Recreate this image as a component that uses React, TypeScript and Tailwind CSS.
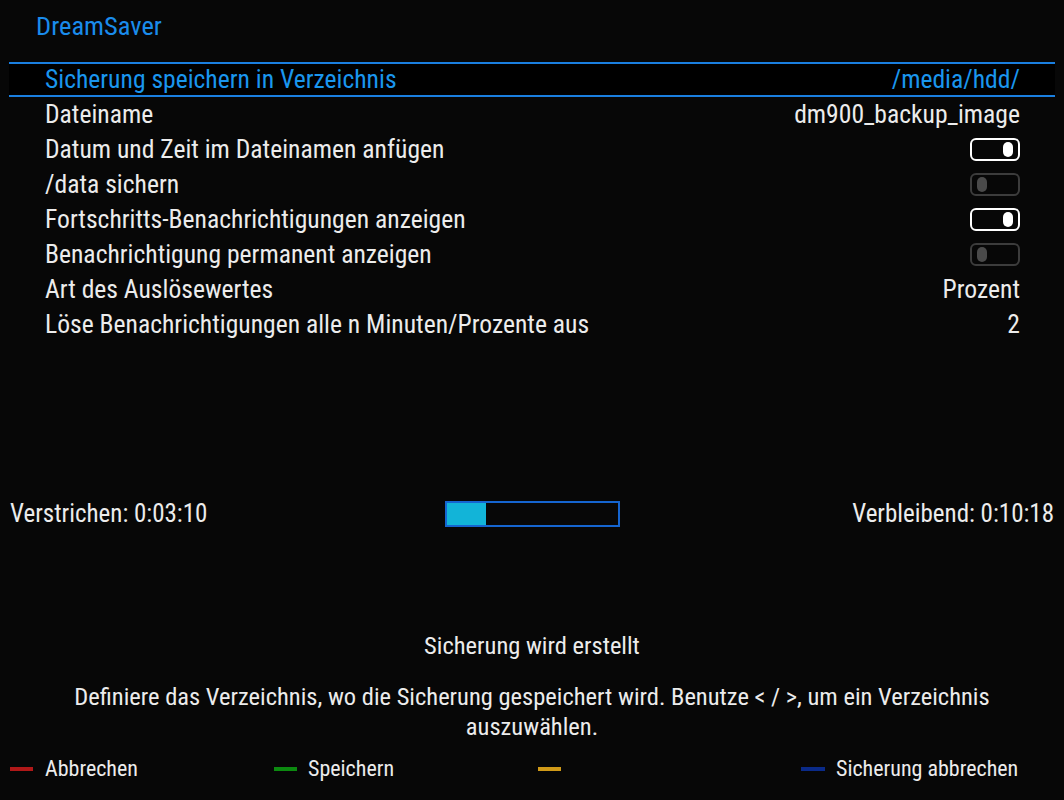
import React from "react";

const rows: { label: string; value?: string; toggle?: boolean }[] = [
  { label: "Sicherung speichern in Verzeichnis", value: "/media/hdd/" },
  { label: "Dateiname", value: "dm900_backup_image" },
  { label: "Datum und Zeit im Dateinamen anfügen", toggle: true },
  { label: "/data sichern", toggle: false },
  { label: "Fortschritts-Benachrichtigungen anzeigen", toggle: true },
  { label: "Benachrichtigung permanent anzeigen", toggle: false },
  { label: "Art des Auslösewertes", value: "Prozent" },
  { label: "Löse Benachrichtigungen alle n Minuten/Prozente aus", value: "2" },
];

function Toggle({ on }: { on: boolean }) {
  return on ? (
    <div className="w-[50px] h-[23px] rounded-[6px] border-2 border-white flex items-center justify-end pr-[5px]">
      <div className="w-[10px] h-[15px] rounded-full bg-white" />
    </div>
  ) : (
    <div className="w-[50px] h-[23px] rounded-[6px] border-2 border-[#3c3c3c] flex items-center justify-start pl-[5px]">
      <div className="w-[10px] h-[15px] rounded-full bg-[#4a4a4a]" />
    </div>
  );
}

export default function App() {
  return (
    <div
      className="w-[1064px] h-[800px] bg-[#070707] text-[#ececec] flex flex-col overflow-hidden"
      style={{ fontFamily: "'Roboto Condensed', Roboto, 'Liberation Sans', sans-serif", fontStretch: "condensed" }}
    >
      <div className="h-[62px] pl-[36px] pt-[10px] text-[26.5px] leading-[32px] text-[#1a8cec]">DreamSaver</div>
      <div className="px-[9px] flex flex-col">
        {rows.map((r, i) => {
          const sel = i === 0;
          return (
            <div
              key={i}
              className={
                "h-[35px] flex items-center justify-between pl-[36px] pr-[35px] text-[25.6px] " +
                (sel ? "border-y-2 border-[#1a7fe0] bg-black text-[#1a96ee]" : "")
              }
            >
              <span>{r.label}</span>
              {r.value !== undefined ? <span>{r.value}</span> : <Toggle on={!!r.toggle} />}
            </div>
          );
        })}
      </div>
      <div className="h-[159px]" />
      <div className="h-[26px] px-[10px] flex items-center justify-between text-[25px]">
        <span className="w-[300px]">Verstrichen: 0:03:10</span>
        <div className="w-[175px] h-[26px] border-2 border-[#1565d0] flex">
          <div className="w-[39px] h-full bg-[#12b4d8]" />
        </div>
        <span className="w-[300px] text-right">Verbleibend: 0:10:18</span>
      </div>
      <div className="h-[104px]" />
      <div className="text-center text-[24.5px] leading-[30px]">Sicherung wird erstellt</div>
      <div className="h-[21px]" />
      <div className="text-center text-[24.5px] leading-[30px] px-[40px]">
        Definiere das Verzeichnis, wo die Sicherung gespeichert wird. Benutze &lt; / &gt;, um ein Verzeichnis auszuwählen.
      </div>
      <div className="h-[12px]" />
      <div className="relative h-[30px] text-[22px] leading-[30px]">
        <div className="absolute left-[10px] top-0 flex items-center gap-[12px]">
          <div className="w-[23px] h-[4px] bg-[#b01818]" />
          <span>Abbrechen</span>
        </div>
        <div className="absolute left-[274px] top-0 flex items-center gap-[11px]">
          <div className="w-[23px] h-[4px] bg-[#0c8a10]" />
          <span>Speichern</span>
        </div>
        <div className="absolute left-[538px] top-0 flex items-center h-[30px]">
          <div className="w-[23px] h-[4px] bg-[#d09a18]" />
        </div>
        <div className="absolute left-[801px] top-0 flex items-center gap-[11px]">
          <div className="w-[24px] h-[4px] bg-[#0a2a88]" />
          <span>Sicherung abbrechen</span>
        </div>
      </div>
    </div>
  );
}
